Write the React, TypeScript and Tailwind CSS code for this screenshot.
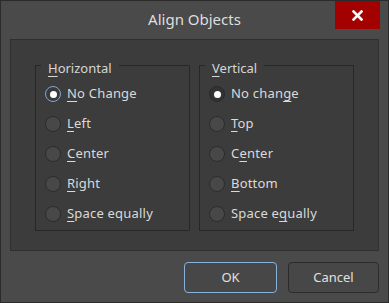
import React from 'react';

type Opt = { pre: string; key: string; post: string };

const horizontal: Opt[] = [
  { pre: '', key: 'N', post: 'o Change' },
  { pre: '', key: 'L', post: 'eft' },
  { pre: '', key: 'C', post: 'enter' },
  { pre: '', key: 'R', post: 'ight' },
  { pre: '', key: 'S', post: 'pace equally' },
];

const vertical: Opt[] = [
  { pre: 'No chan', key: 'g', post: 'e' },
  { pre: '', key: 'T', post: 'op' },
  { pre: 'C', key: 'e', post: 'nter' },
  { pre: '', key: 'B', post: 'ottom' },
  { pre: 'Space e', key: 'q', post: 'ually' },
];

const Radio = ({ checked, focused }: { checked: boolean; focused?: boolean }) => {
  if (checked) {
    return (
      <span
        className={`w-[16px] h-[16px] rounded-full flex items-center justify-center shrink-0 border-[1.5px] ${
          focused ? 'border-[#80a9d4] bg-[#3a3a3a]' : 'border-[#2a2a2a] bg-[#333333]'
        }`}
      >
        <span className="w-[7px] h-[7px] rounded-full bg-white" />
      </span>
    );
  }
  return <span className="w-[16px] h-[16px] rounded-full shrink-0 border border-[#2c2c2c] bg-[#484848]" />;
};

const Group = ({ title, opts, focused }: { title: React.ReactNode; opts: Opt[]; focused?: boolean }) => (
  <div className="relative w-[155px] h-[166px] border border-[#272727] pt-[13px] pl-[9px]">
    <span className="absolute left-[5px] top-[-7px] px-[7px] bg-[#3c3c3c] text-[13px] leading-[18px] text-[#d6d6d6]">
      {title}
    </span>
    {opts.map((o, i) => (
      <div key={i} className="h-[30px] flex items-center gap-[6px]">
        <Radio checked={i === 0} focused={focused} />
        <span className="text-[13px] tracking-[0.2px] text-[#dadada] whitespace-nowrap">
          {o.pre}
          <u className="underline-offset-[3px]">{o.key}</u>
          {o.post}
        </span>
      </div>
    ))}
  </div>
);

export default function App() {
  return (
    <div className="w-[389px] h-[303px] bg-[#4a4a4a] border border-[#2b2b2b] flex flex-col font-['Noto_Sans',_'Open_Sans',_sans-serif]">
      <div className="relative h-[38px] flex items-center justify-center shrink-0">
        <span className="text-[15px] text-[#dedede] pb-[1px]">Align Objects</span>
        <button className="absolute right-[8px] top-0 w-[45px] h-[28px] bg-[#a30000] flex items-center justify-center">
          <svg width="11" height="11" viewBox="0 0 11 11">
            <path d="M1.5 1.5 L9.5 9.5 M9.5 1.5 L1.5 9.5" stroke="white" strokeWidth="2.6" strokeLinecap="square" />
          </svg>
        </button>
      </div>
      <div className="mx-[9px] h-[212px] bg-[#3c3c3c] border border-[#2f2f2f] pt-[25px] pl-[24px] flex gap-[9px] shrink-0">
        <Group title={<><u className="underline-offset-[3px]">H</u>orizontal</>} opts={horizontal} focused />
        <Group title={<><u className="underline-offset-[3px]">V</u>ertical</>} opts={vertical} />
      </div>
      <div className="flex justify-end gap-[11px] mt-[11px] mr-[9px]">
        <button className="w-[93px] h-[31px] rounded-[4px] border border-[#86b2dd] bg-[#474747] text-[13px] text-[#e0e0e0]">
          OK
        </button>
        <button className="w-[91px] h-[31px] rounded-[4px] border border-[#2b2b2b] bg-[#474747] text-[13px] text-[#e0e0e0]">
          Cancel
        </button>
      </div>
    </div>
  );
}
